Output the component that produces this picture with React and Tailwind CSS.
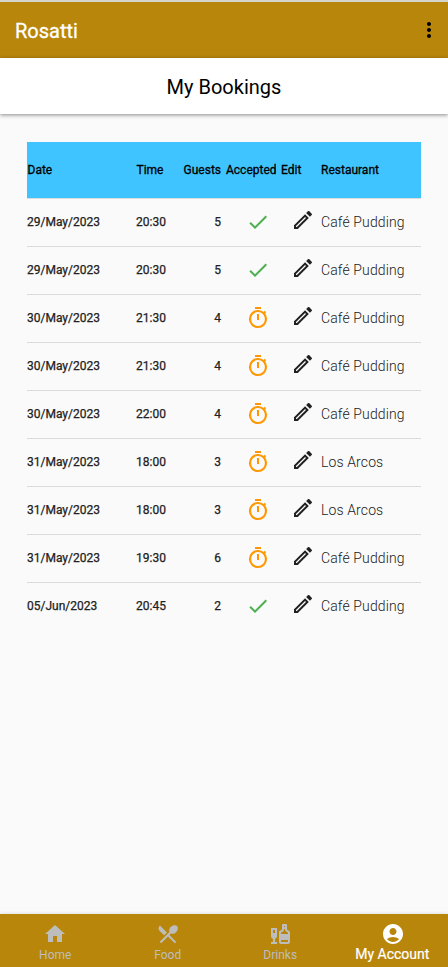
import { useState } from "react";
import {
  MdAccountCircle,
  MdCheck,
  MdHome,
  MdLiquor,
  MdMoreVert,
  MdOutlineEdit,
  MdRestaurantMenu,
} from "react-icons/md";

const bookings = [
  { date: "29/May/2023", time: "20:30", guests: 5, accepted: true, restaurant: "Café Pudding" },
  { date: "29/May/2023", time: "20:30", guests: 5, accepted: true, restaurant: "Café Pudding" },
  { date: "30/May/2023", time: "21:30", guests: 4, accepted: false, restaurant: "Café Pudding" },
  { date: "30/May/2023", time: "21:30", guests: 4, accepted: false, restaurant: "Café Pudding" },
  { date: "30/May/2023", time: "22:00", guests: 4, accepted: false, restaurant: "Café Pudding" },
  { date: "31/May/2023", time: "18:00", guests: 3, accepted: false, restaurant: "Los Arcos" },
  { date: "31/May/2023", time: "18:00", guests: 3, accepted: false, restaurant: "Los Arcos" },
  { date: "31/May/2023", time: "19:30", guests: 6, accepted: false, restaurant: "Café Pudding" },
  { date: "05/Jun/2023", time: "20:45", guests: 2, accepted: true, restaurant: "Café Pudding" },
];

const tabs = [
  { name: "Home", Icon: MdHome },
  { name: "Food", Icon: MdRestaurantMenu },
  { name: "Drinks", Icon: MdLiquor },
  { name: "My Account", Icon: MdAccountCircle },
];

const columns = "grid grid-cols-[109px_40px_45px_55px_40px_1fr] items-center";

function TimerIcon() {
  return (
    <svg viewBox="0 0 24 24" fill="none" stroke="currentColor" strokeWidth="2" className="size-6 shrink-0 text-[#ff9800]">
      <path d="M9 2h6M12 8v6M17.6 7.4l1.9-1.9" />
      <circle cx="12" cy="13" r="8" strokeWidth="2.2" />
    </svg>
  );
}

function BookingRow({ booking }) {
  return (
    <div className={`${columns} h-12 border-t border-[#dcdcdc] pb-px text-xs text-[#212121]`}>
      <div className="[-webkit-text-stroke:0.25px]">{booking.date}</div>
      <div className="[-webkit-text-stroke:0.25px]">{booking.time}</div>
      <div className="text-right [-webkit-text-stroke:0.25px]">{booking.guests}</div>
      <div className="flex justify-center pl-[18px]">
        {booking.accepted ? (
          <MdCheck className="size-6 shrink-0 text-[#4caf50]" />
        ) : (
          <TimerIcon />
        )}
      </div>
      <button type="button" className="ml-[15px] -mt-1">
        <MdOutlineEdit className="size-6" />
      </button>
      <div className="pl-[5px] text-sm font-light tracking-[0.12px]">{booking.restaurant}</div>
    </div>
  );
}

function App() {
  const [tab, setTab] = useState("My Account");

  return (
    <div className="flex h-screen flex-col overflow-hidden bg-[#fafafa] font-['Roboto',sans-serif] text-black">
      {/* App bar */}
      <header className="flex h-[58px] shrink-0 items-center justify-between border-t-2 border-[#d5d5cd] bg-[#b8860b] pl-[15px] pr-[7px]">
        <h1 className="pt-0.5 text-xl text-white [-webkit-text-stroke:0.3px]">Rosatti</h1>
        <button type="button">
          <MdMoreVert className="size-6" />
        </button>
      </header>

      {/* Title */}
      <div className="flex h-14 shrink-0 items-center justify-center bg-white pt-0.5 text-xl shadow-[0_1px_4px_rgba(0,0,0,0.45)]">
        My Bookings
      </div>

      {/* Bookings */}
      <main className="mx-[27px] mt-7 flex-1">
        <div className={`${columns} h-14 bg-[#40c4ff] text-xs [-webkit-text-stroke:0.3px]`}>
          <div className="pl-[0.5px]">Date</div>
          <div className="pl-[0.5px]">Time</div>
          <div className="text-right">Guests</div>
          <div className="overflow-hidden whitespace-nowrap pl-[5px]">Accepted</div>
          <div className="pl-[5px]">Edit</div>
          <div className="pl-[5px]">Restaurant</div>
        </div>
        {bookings.map((booking, i) => (
          <BookingRow key={i} booking={booking} />
        ))}
      </main>

      {/* Bottom navigation */}
      <nav className="h-[53px] shrink-0 bg-[#b8860b] shadow-[0_0_4px_rgba(0,0,0,0.15)]">
        <div className="-mx-px grid grid-cols-4">
          {tabs.map(({ name, Icon }) => (
            <button
              key={name}
              type="button"
              onClick={() => setTab(name)}
              className={`flex flex-col items-center pt-2 ${tab === name ? "text-sm/4 text-white [-webkit-text-stroke:0.2px]" : "text-xs/[18px] text-[#bdbdbd]"}`}
            >
              <Icon className="size-6 shrink-0" />
              <span className={tab === name ? "pr-px" : ""}>{name}</span>
            </button>
          ))}
        </div>
      </nav>
    </div>
  );
}

export default App;
